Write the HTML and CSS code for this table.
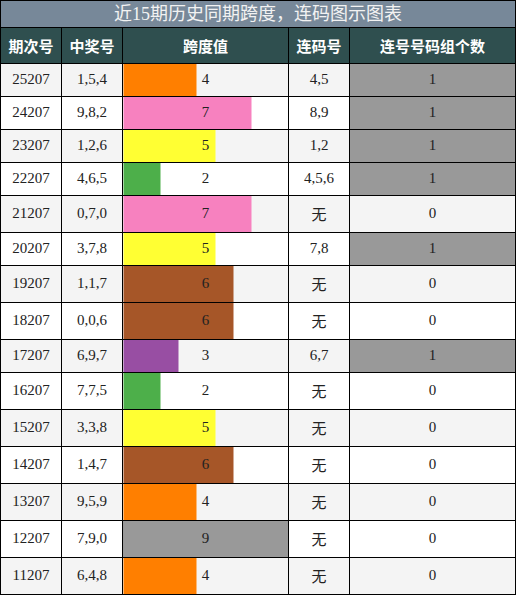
FILE: index.html
```html
<!DOCTYPE html>
<html lang="zh">
  <head>
    <meta charset="UTF-8" />
    <title>近15期历史同期跨度，连码图示图表</title>
    <link rel="stylesheet" href="styles.css">
  </head>
  <body>
    <table class="chart">
      <colgroup>
        <col class="c-num" />
        <col class="c-num" />
        <col class="c-wide" />
        <col class="c-num" />
        <col class="c-wide" />
      </colgroup>
      <thead>
        <tr>
          <th class="title" colspan="5">近15期历史同期跨度，连码图示图表</th>
        </tr>
        <tr class="head">
          <th>期次号</th>
          <th>中奖号</th>
          <th>跨度值</th>
          <th>连码号</th>
          <th>连号号码组个数</th>
        </tr>
      </thead>
      <tbody>
        <tr><td>25207</td><td>1,5,4</td><td class="span s4" style="--w:44.44%">4</td><td>4,5</td><td class="has">1</td></tr>
        <tr><td>24207</td><td>9,8,2</td><td class="span s7" style="--w:77.78%">7</td><td>8,9</td><td class="has">1</td></tr>
        <tr><td>23207</td><td>1,2,6</td><td class="span s5" style="--w:55.56%">5</td><td>1,2</td><td class="has">1</td></tr>
        <tr><td>22207</td><td>4,6,5</td><td class="span s2" style="--w:22.22%">2</td><td>4,5,6</td><td class="has">1</td></tr>
        <tr><td>21207</td><td>0,7,0</td><td class="span s7" style="--w:77.78%">7</td><td class="none">无</td><td>0</td></tr>
        <tr><td>20207</td><td>3,7,8</td><td class="span s5" style="--w:55.56%">5</td><td>7,8</td><td class="has">1</td></tr>
        <tr><td>19207</td><td>1,1,7</td><td class="span s6" style="--w:66.67%">6</td><td class="none">无</td><td>0</td></tr>
        <tr><td>18207</td><td>0,0,6</td><td class="span s6" style="--w:66.67%">6</td><td class="none">无</td><td>0</td></tr>
        <tr><td>17207</td><td>6,9,7</td><td class="span s3" style="--w:33.33%">3</td><td>6,7</td><td class="has">1</td></tr>
        <tr><td>16207</td><td>7,7,5</td><td class="span s2" style="--w:22.22%">2</td><td class="none">无</td><td>0</td></tr>
        <tr><td>15207</td><td>3,3,8</td><td class="span s5" style="--w:55.56%">5</td><td class="none">无</td><td>0</td></tr>
        <tr><td>14207</td><td>1,4,7</td><td class="span s6" style="--w:66.67%">6</td><td class="none">无</td><td>0</td></tr>
        <tr><td>13207</td><td>9,5,9</td><td class="span s4" style="--w:44.44%">4</td><td class="none">无</td><td>0</td></tr>
        <tr><td>12207</td><td>7,9,0</td><td class="span s9" style="--w:100%">9</td><td class="none">无</td><td>0</td></tr>
        <tr><td>11207</td><td>6,4,8</td><td class="span s4" style="--w:44.44%">4</td><td class="none">无</td><td>0</td></tr>
      </tbody>
    </table>
  </body>
</html>
```

FILE: styles.css
```css
* {
  margin: 0;
  padding: 0;
  box-sizing: border-box;
}
body {
  width: 516px;
  font-family: "Liberation Serif", "Noto Sans CJK SC", serif;
  color: #222;
}
.chart {
  width: 516px;
  border-collapse: collapse;
  table-layout: fixed;
  font-size: 15px;
}
.c-num {
  width: 61px;
}
.c-wide {
  width: 166px;
}
.chart th,
.chart td {
  border: 1px solid #000;
  text-align: center;
  vertical-align: middle;
}
.chart td {
  padding: 7px 0 8px;
}
.chart .title {
  background-color: #778899;
  color: #f2f2f2;
  font-weight: normal;
  font-size: 18px;
  line-height: 26px;
  padding: 0;
}
.head th {
  background-color: #2f4f4f;
  color: #fff;
  font-weight: bold;
  font-size: 15px;
  padding: 7px 0 7px;
}
.chart tbody tr:nth-child(odd) td {
  background-color: #f4f4f4;
}
.chart tbody tr:nth-child(even) td {
  background-color: #fff;
}
.chart .none {
  font-family: "Noto Sans CJK SC", sans-serif;
  font-size: 15px;
}
.chart tbody tr td.has {
  background-color: #999;
}
/* bar inside the span column */
.chart tbody tr td.span {
  background-image: linear-gradient(to right, var(--bar) var(--w), transparent var(--w));
}
.s2 { --bar: #4daf4a; }
.s3 { --bar: #984ea3; }
.s4 { --bar: #ff7f00; }
.s5 { --bar: #ffff33; }
.s6 { --bar: #a65628; }
.s7 { --bar: #f781bf; }
.s9 { --bar: #999999; }
```
